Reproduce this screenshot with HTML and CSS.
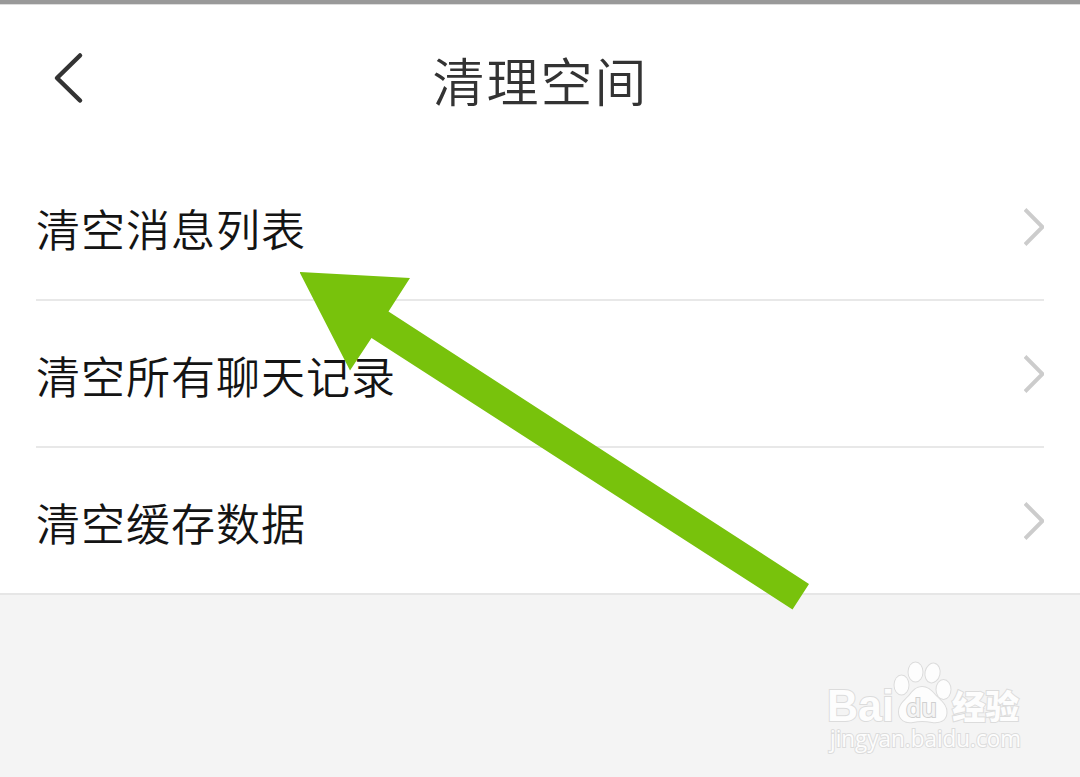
FILE: index.html
```html
<!DOCTYPE html>
<html lang="zh-CN">
<head>
  <meta charset="UTF-8">
  <meta name="viewport" content="width=device-width, initial-scale=1.0">
  <title>清理空间</title>
  <link rel="stylesheet" href="styles.css">
</head>
<body>
  <!-- Header -->
  <header class="header">
    <a href="#" class="back" aria-label="返回">
      <svg width="32" height="54" viewBox="0 0 32 54">
        <path d="M28 4.5 L5 27 L28 49.5" />
      </svg>
    </a>
    <h1>清理空间</h1>
  </header>

  <!-- Options -->
  <ul class="list">
    <li>
      <span>清空消息列表</span>
      <svg class="chevron" width="20" height="40" viewBox="0 0 20 40"><path d="M1 2.5 L18.5 20 L1 37.5" /></svg>
    </li>
    <li>
      <span>清空所有聊天记录</span>
      <svg class="chevron" width="20" height="40" viewBox="0 0 20 40"><path d="M1 2.5 L18.5 20 L1 37.5" /></svg>
    </li>
    <li>
      <span>清空缓存数据</span>
      <svg class="chevron" width="20" height="40" viewBox="0 0 20 40"><path d="M1 2.5 L18.5 20 L1 37.5" /></svg>
    </li>
  </ul>

  <!-- Pointer arrow -->
  <svg class="arrow" width="510" height="338" viewBox="300 272 510 338">
    <polygon points="299.5,272 410,278 388.5,311.5 809,584 792.5,609.5 371.5,338 350,370.5" />
  </svg>

  <!-- Watermark -->
  <svg class="watermark" width="210" height="110" viewBox="0 0 210 110">
    <text class="brand" x="7" y="71" textLength="67" lengthAdjust="spacingAndGlyphs">Bai</text>
    <ellipse cx="81.5" cy="35" rx="7" ry="9.5" />
    <ellipse cx="95.5" cy="22" rx="7" ry="9.5" />
    <ellipse cx="112.5" cy="23" rx="7" ry="9.5" transform="rotate(12 112.5 23)" />
    <ellipse cx="123.5" cy="39.5" rx="7" ry="9.5" />
    <path d="M102 37 C108 37 112 41 116 46 C121 51 127 55 126.5 63 C126 71 119 73 112 72 C105 70.5 99 70.5 93 72 C85 73.5 79 69 79 62 C79 55 84 51 89 46 C93 41 96 37 102 37 Z" />
    <text class="du" x="86" y="67" textLength="31" lengthAdjust="spacingAndGlyphs">du</text>
    <text class="cn" x="132" y="69" textLength="67" lengthAdjust="spacingAndGlyphs">经验</text>
    <text class="url" x="10" y="97" textLength="191" lengthAdjust="spacingAndGlyphs">jingyan.baidu.com</text>
  </svg>
</body>
</html>
```

FILE: styles.css
```css
* {
  margin: 0;
  padding: 0;
  box-sizing: border-box;
}

body {
  height: 777px;
  overflow: hidden;
  background-color: #f4f4f4;
  border-top: 4px solid #999;
  font-family: "Noto Sans CJK SC", sans-serif;
  color: #141414;
}

ul {
  list-style-type: none;
}

.header {
  display: grid;
  grid-template-columns: 120px 1fr 120px;
  align-items: center;
  height: 150px;
  background-color: #fff;
  border-top: 1px solid #ddd;
}

.back {
  display: block;
  height: 54px;
  margin: -3px 0 0 52px;
}

.back path {
  fill: none;
  stroke: #333;
  stroke-width: 4.5;
  stroke-linecap: round;
  stroke-linejoin: round;
}

.header h1 {
  font-size: 52px;
  font-weight: 350;
  line-height: 80px;
  letter-spacing: 2px;
  padding-left: 1px;
  text-align: center;
  color: #333;
}

.list {
  padding: 0 36px;
  background-color: #fff;
  border-bottom: 2px solid #e6e6e6;
}

.list li {
  display: flex;
  justify-content: space-between;
  align-items: center;
  height: 147px;
  padding-top: 1px;
  border-bottom: 2px solid #e8e8e8;
  font-size: 44px;
  font-weight: 350;
  line-height: 66px;
  letter-spacing: 1px;
}

.list li:last-child {
  height: 145px;
  border-bottom: none;
}

.list span {
  padding-top: 2px;
}

.chevron path {
  fill: none;
  stroke: #ccc;
  stroke-width: 4;
}

.arrow {
  position: absolute;
  left: 300px;
  top: 272px;
  fill: #78c20c;
}

.watermark {
  position: absolute;
  left: 820px;
  top: 650px;
  fill: #fdfdfd;
  stroke: #dcdcdc;
  stroke-width: 2;
  paint-order: stroke;
}

.watermark .brand {
  font: bold 44px "Liberation Sans", sans-serif;
}

.watermark .du {
  font: 600 25px "Open Sans", sans-serif;
  fill: #f4f4f4;
  stroke: #d0d0d0;
}

.watermark .cn {
  font: 900 33px "Noto Sans CJK SC", sans-serif;
}

.watermark .url {
  font: 23px "Open Sans", sans-serif;
}
```
